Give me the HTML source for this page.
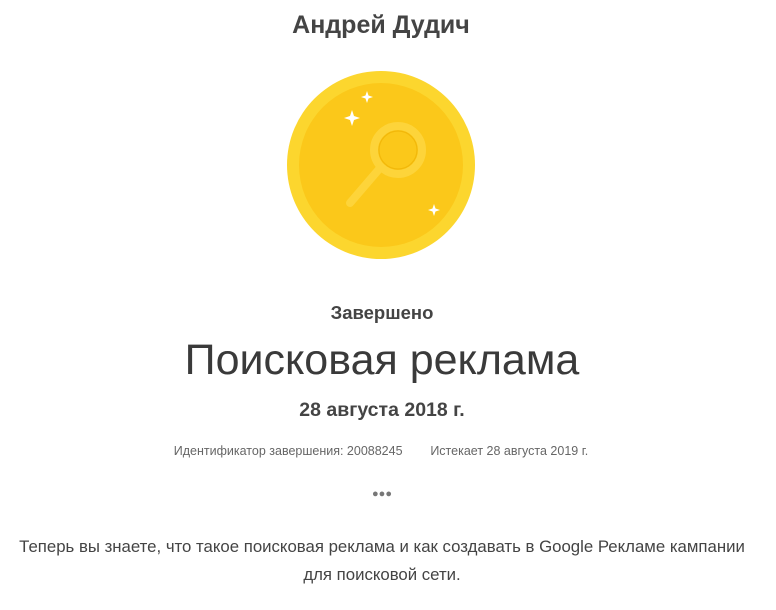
<!DOCTYPE html>
<html><head><meta charset="utf-8"><style>
body{margin:0;width:776px;height:610px;background:#fff;font-family:"Liberation Sans",sans-serif;color:#3c3c3c;position:relative;overflow:hidden}
.t{position:absolute;left:-7px;width:776px;text-align:center;white-space:nowrap}
</style></head><body>
<div class="t" style="top:11px;font-size:25px;font-weight:bold;color:#444;left:-7px">Андрей Дудич</div>
<svg style="position:absolute;left:286px;top:70px" width="190" height="190" viewBox="0 0 190 190">
<circle cx="95" cy="95" r="94" fill="#fcd62e"/>
<circle cx="95" cy="95" r="82" fill="#fbc81a"/>
<g fill="none" stroke="#fdd43a" stroke-width="8" stroke-linecap="round">
<circle cx="112" cy="80" r="24"/>
<line x1="94" y1="98" x2="64" y2="133"/>
</g>
<circle cx="112" cy="80" r="19" fill="none" stroke="#f2b80a" stroke-width="1.2"/>
<g fill="#fff">
<path d="M66 40 l2 6 6 2 -6 2 -2 6 -2 -6 -6 -2 6 -2z"/>
<path d="M81 21 l1.5 4.5 4.5 1.5 -4.5 1.5 -1.5 4.5 -1.5 -4.5 -4.5 -1.5 4.5 -1.5z"/>
<path d="M148 134 l1.5 4.5 4.5 1.5 -4.5 1.5 -1.5 4.5 -1.5 -4.5 -4.5 -1.5 4.5 -1.5z"/>
</g>
</svg>
<div class="t" style="top:302px;font-size:18.5px;font-weight:bold;color:#444;left:-6px">Завершено</div>
<div class="t" style="top:336px;font-size:43px;color:#3a3a3a;left:-6px">Поисковая реклама</div>
<div class="t" style="top:399px;font-size:19.5px;font-weight:bold;color:#444;left:-6px">28 августа 2018 г.</div>
<div class="t" style="top:444px;font-size:12.5px;color:#666;left:-7px">Идентификатор завершения: 20088245&nbsp;&nbsp;&nbsp;&nbsp;&nbsp;&nbsp;&nbsp;&nbsp;Истекает 28 августа 2019 г.</div>
<div class="t" style="top:488px;font-size:11px;color:#777;left:-6px">●●●</div>
<div class="t" style="top:537px;font-size:16.8px;color:#444;left:-6px">Теперь вы знаете, что такое поисковая реклама и как создавать в Google Рекламе кампании</div>
<div class="t" style="top:565px;font-size:16.8px;color:#444;left:-6px">для поисковой сети.</div>
</body></html>
